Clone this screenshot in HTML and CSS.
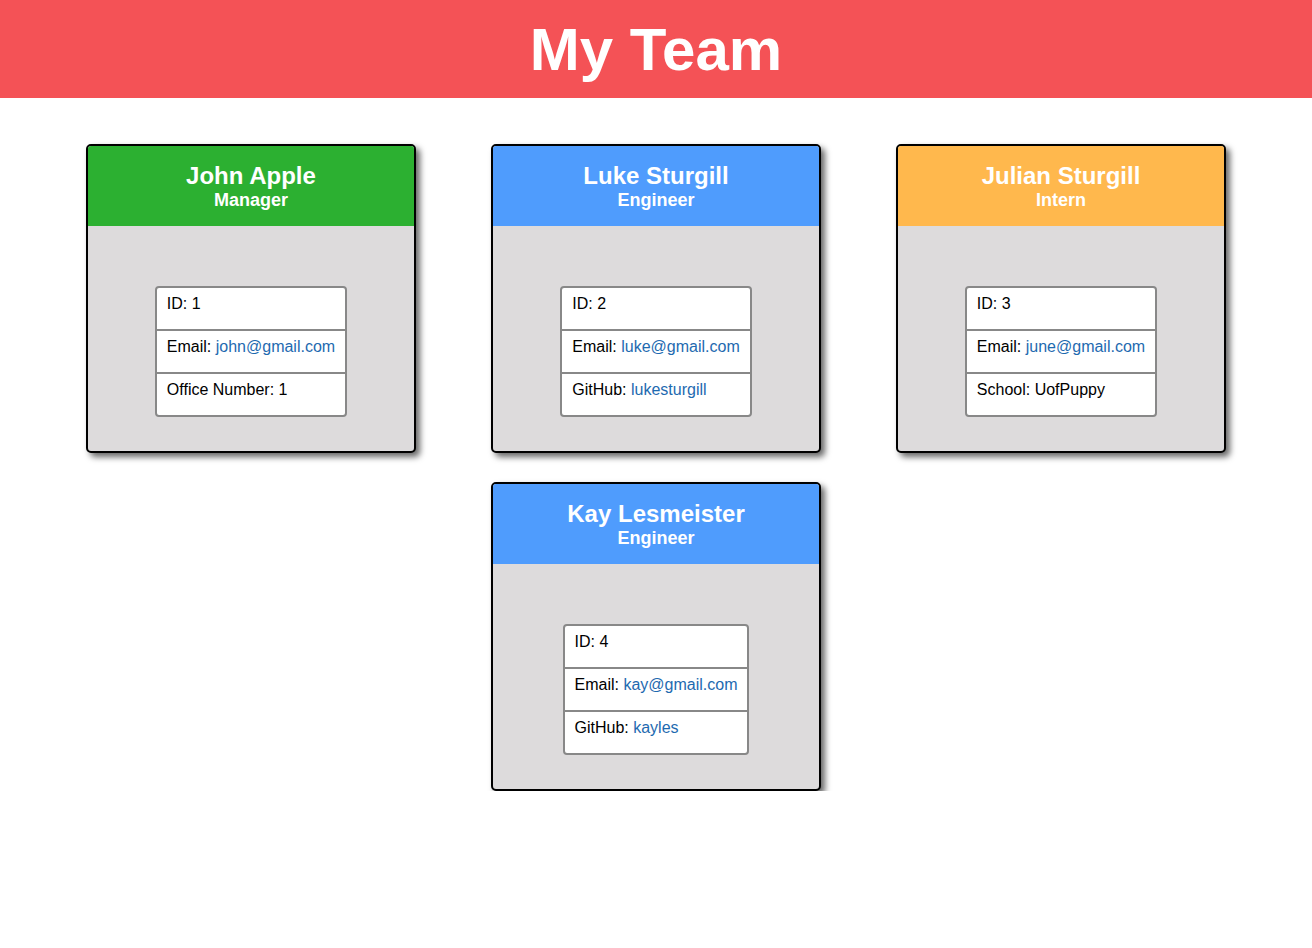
FILE: index.html
```html
<!DOCTYPE html>
<html lang="en">
<head>
<meta charset="UTF-8">
<title>My Team</title>
<link rel="stylesheet" href="styles.css">
</head>
<body>
<header class="banner">
  <h1 class="banner-title">My Team</h1>
</header>
<main class="team">
  <section class="card">
    <div class="card-head manager">
      <h2 class="card-name">John Apple</h2>
      <h3 class="card-role">Manager</h3>
    </div>
    <div class="card-body">
      <ul class="info">
        <li>ID: 1</li>
        <li>Email: <a href="#">john@gmail.com</a></li>
        <li>Office Number: 1</li>
      </ul>
    </div>
  </section>
  <section class="card">
    <div class="card-head engineer">
      <h2 class="card-name">Luke Sturgill</h2>
      <h3 class="card-role">Engineer</h3>
    </div>
    <div class="card-body">
      <ul class="info">
        <li>ID: 2</li>
        <li>Email: <a href="#">luke@gmail.com</a></li>
        <li>GitHub: <a href="#">lukesturgill</a></li>
      </ul>
    </div>
  </section>
  <section class="card">
    <div class="card-head intern">
      <h2 class="card-name">Julian Sturgill</h2>
      <h3 class="card-role">Intern</h3>
    </div>
    <div class="card-body">
      <ul class="info">
        <li>ID: 3</li>
        <li>Email: <a href="#">june@gmail.com</a></li>
        <li>School: UofPuppy</li>
      </ul>
    </div>
  </section>
  <section class="card">
    <div class="card-head engineer">
      <h2 class="card-name">Kay Lesmeister</h2>
      <h3 class="card-role">Engineer</h3>
    </div>
    <div class="card-body">
      <ul class="info">
        <li>ID: 4</li>
        <li>Email: <a href="#">kay@gmail.com</a></li>
        <li>GitHub: <a href="#">kayles</a></li>
      </ul>
    </div>
  </section>
</main>
</body>
</html>
```

FILE: styles.css
```css
* {
  box-sizing: border-box;
}

body {
  margin: 0;
  font-family: "Liberation Sans", Arial, Helvetica, sans-serif;
  background: #ffffff;
  color: #000000;
}

.banner {
  height: 98px;
  background: #f45256;
  display: flex;
  align-items: center;
  justify-content: center;
}

.banner-title {
  margin: 0;
  color: #ffffff;
  font-size: 60px;
  font-weight: bold;
  line-height: normal;
}

.team {
  width: 1141px;
  margin: 46px auto 0;
  display: flex;
  flex-wrap: wrap;
  justify-content: center;
  column-gap: 75px;
  row-gap: 29px;
}

.card {
  width: 330px;
  border: 2px solid #000000;
  border-radius: 5px;
  overflow: hidden;
  background: #dddbdc;
  box-shadow: 4px 4px 6px rgba(0, 0, 0, 0.6);
}

.card-head {
  padding: 16px 10px 15px;
  text-align: center;
  color: #ffffff;
}

.manager {
  background: #2cb031;
}

.engineer {
  background: #4f9cfd;
}

.intern {
  background: #ffb84d;
}

.card-name {
  margin: 0;
  font-size: 24px;
  font-weight: bold;
  line-height: normal;
}

.card-role {
  margin: 0;
  font-size: 18px;
  font-weight: bold;
  line-height: normal;
}

.card-body {
  padding: 60px 0 34px;
  display: flex;
  justify-content: center;
}

.info {
  list-style: none;
  margin: 0;
  padding: 0;
  background: #ffffff;
  border: 2px solid #888888;
  border-radius: 4px;
  font-size: 16px;
}

.info li {
  padding: 6px 10px 16px;
  line-height: 19px;
  white-space: nowrap;
}

.info li + li {
  border-top: 2px solid #888888;
}

.info a {
  color: #1e6ab0;
  text-decoration: none;
}
```
